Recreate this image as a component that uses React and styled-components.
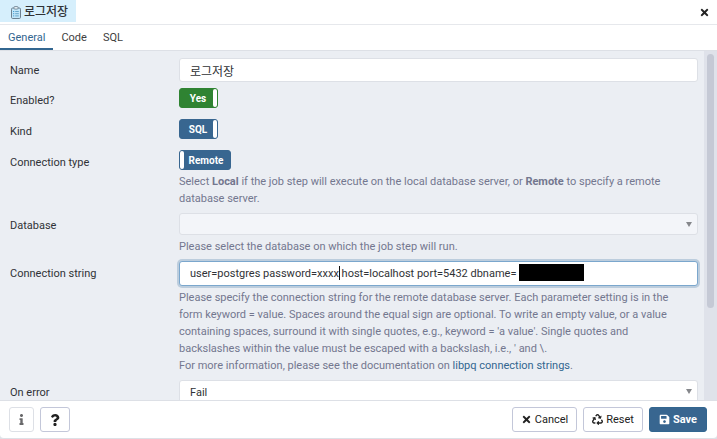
import React from "react";
import styled, { createGlobalStyle, css } from "styled-components";
import { FaTimes, FaRecycle, FaSave, FaInfo, FaQuestion } from "react-icons/fa";

const Global = createGlobalStyle`
  * { box-sizing: border-box; }
  body {
    margin: 0;
    background: #dde0e6;
    color: #303236;
    font: 11px/17px Roboto, "Noto Sans CJK KR", sans-serif;
  }
  button, input, select { font: inherit; color: inherit; }
`;

const Dialog = styled.main`
  display: flex;
  flex-direction: column;
  height: 100vh;
  border-bottom: 1px solid #dde0e6;
  border-radius: 0 0 4px 4px;
  background: #ffffff;
  overflow: hidden;
`;

const TitleBar = styled.header`
  display: flex;
  flex: none;
  align-items: flex-start;
  justify-content: space-between;
  height: 25px;
  border-bottom: 1px solid #e6e8ec;
`;

const Title = styled.h1`
  display: flex;
  align-items: center;
  gap: 3px;
  height: 22px;
  margin: 0;
  padding: 3px 8px 0 11px;
  background: #d6effc;
  font-size: 12px;
  font-weight: 500;
`;

const CloseButton = styled.button`
  display: flex;
  align-items: center;
  height: 24px;
  padding: 0 7px;
  border: 0;
  background: none;
  color: #222222;
  font-size: 11px;
`;

const Tabs = styled.nav`
  display: flex;
  flex: none;
  height: 26px;
  border-bottom: 1px solid #dde0e6;
`;

const Tab = styled.button`
  padding: 2px 8px 0;
  border: 0;
  border-bottom: 2px solid ${(p) => (p.$active ? "#326690" : "transparent")};
  background: none;
  color: ${(p) => (p.$active ? "#326690" : "#404040")};
`;

const Body = styled.div`
  display: flex;
  flex: 1;
  min-height: 0;
  background: #ebeef3;
`;

const Form = styled.form`
  flex: 1;
  min-width: 0;
  padding: 7px 6px 0 10px;
  overflow: hidden;
`;

const ScrollTrack = styled.div`
  flex: none;
  width: 13px;
  padding: 3px;
  background: #dfe2ea;
`;

const ScrollThumb = styled.div`
  width: 7px;
  height: 74%;
  border-radius: 4px;
  background: #c5c9d5;
`;

const Row = styled.div`
  display: grid;
  grid-template-columns: 169px minmax(0, 1fr);
  min-height: 24px;
  margin-bottom: 6px;
`;

const SwitchRow = styled(Row)`
  min-height: 25px;
`;

const FieldLabel = styled.label`
  padding-top: 4px;
`;

const field = css`
  display: block;
  width: 100%;
  height: 24px;
  padding: 0 10px;
  border: 1px solid #dde0e6;
  border-radius: 3px;
  outline: none;
  background: #ffffff;
`;

const TextInput = styled.input`
  ${field}
  font-size: ${(p) => p.$size || 11}px;
  ${(p) =>
    p.$active &&
    css`
      height: 25px;
      border-color: #7ba7cd;
      box-shadow: 0 0 0 2px #bccddd;
    `}
`;

const Select = styled.select`
  ${field}
  height: ${(p) => (p.disabled ? 22 : 24)}px;
  appearance: none;
  opacity: 1;
  &:disabled { background: #f3f5f9; }
`;

const Control = styled.div`
  position: relative;
`;

const Arrow = styled.svg`
  position: absolute;
  top: 9px;
  right: 6px;
  width: 6px;
  height: 5px;
  fill: #85878b;
  pointer-events: none;
`;

const Caret = styled.span`
  position: absolute;
  top: 5px;
  left: 160px;
  width: 1px;
  height: 14px;
  background: #111111;
`;

const Redaction = styled.span`
  position: absolute;
  top: 3px;
  left: 340px;
  width: 65px;
  height: 17px;
  background: #000000;
`;

const Help = styled.p`
  margin: 3px 0 0;
  padding-right: 12px;
  color: #73778f;
`;

const Link = styled.a`
  color: #326690;
  text-decoration: none;
`;

const SwitchInput = styled.input`
  position: absolute;
  inset: 0;
  width: 100%;
  height: 100%;
  margin: 0;
  opacity: 0;
`;

const Switch = styled.span`
  position: relative;
  display: flex;
  flex-direction: ${(p) => (p.$on ? "row" : "row-reverse")};
  width: ${(p) => (p.$on ? 39 : 52)}px;
  height: 20px;
  border: 1px solid ${(p) => p.$color};
  border-radius: 3px;
  background: ${(p) => p.$color};
  color: #ffffff;
  font-size: 10px;
  font-weight: 700;
  line-height: 19px;
  text-align: center;
`;

const SwitchText = styled.span`
  flex: 1;
  padding-left: ${(p) => (p.$on ? 3 : 0)}px;
  padding-right: ${(p) => (p.$on ? 0 : 2)}px;
`;

const SwitchHandle = styled.span`
  width: 4px;
  border-radius: 2px;
  background: #ffffff;
`;

const Footer = styled.footer`
  display: flex;
  flex: none;
  align-items: center;
  gap: 6px;
  height: 38px;
  padding: 0 10px 0 9px;
  border-top: 1px solid #dde0e6;
`;

const Spacer = styled.div`
  flex: 1;
`;

const Button = styled.button`
  display: flex;
  align-items: center;
  justify-content: center;
  gap: 3px;
  height: 25px;
  padding: 0 ${(p) => (p.$primary ? 9 : 8)}px;
  border: 1px solid ${(p) => (p.$primary ? "#326690" : "#c3c7d9")};
  border-radius: 3px;
  background: ${(p) => (p.$primary ? "#386690" : "#ffffff")};
  color: ${(p) => (p.$primary ? "#ffffff" : "#222222")};
  font-weight: ${(p) => (p.$primary ? 700 : 400)};
`;

const IconButton = styled(Button)`
  width: 30px;
  padding: 0;
  &:disabled {
    width: 25px;
    color: #69696b;
    border-color: #dde0e6;
  }
`;

const ClipboardIcon = () => (
  <svg width="10" height="13" viewBox="0 0 10 13" aria-hidden="true">
    <rect x="0.5" y="2" width="9" height="10.5" rx="1.2" fill="#c3e6f8" stroke="#6d8190" />
    <rect x="3" y="0.5" width="4" height="2.6" rx="0.8" fill="#e2ecf2" stroke="#6d8190" strokeWidth="0.8" />
    <path d="M2.2 5.5h1M2.2 7.7h1M2.2 9.9h1" stroke="#2b8fc9" />
    <path d="M4.2 5.5h3.6M4.2 7.7h3.6M4.2 9.9h3.6" stroke="#5d9fc4" strokeWidth="0.9" />
  </svg>
);

const Toggle = ({ id, text, on, color }) => (
  <Switch $on={on} $color={color}>
    <SwitchInput id={id} type="checkbox" role="switch" defaultChecked={on} />
    <SwitchText $on={on}>{text}</SwitchText>
    <SwitchHandle />
  </Switch>
);

const DropArrow = () => (
  <Arrow viewBox="0 0 6 5" aria-hidden="true">
    <path d="M0 0h6L3 5z" />
  </Arrow>
);

export default function App() {
  return (
    <>
      <Global />
      <Dialog>
        <TitleBar>
          <Title>
            <ClipboardIcon />
            로그저장
          </Title>
          <CloseButton aria-label="Close">
            <FaTimes />
          </CloseButton>
        </TitleBar>
        <Tabs>
          <Tab $active>General</Tab>
          <Tab>Code</Tab>
          <Tab>SQL</Tab>
        </Tabs>
        <Body>
          <Form>
            <Row>
              <FieldLabel htmlFor="name">Name</FieldLabel>
              <TextInput id="name" $size={12} defaultValue="로그저장" />
            </Row>
            <SwitchRow>
              <FieldLabel htmlFor="enabled">Enabled?</FieldLabel>
              <Toggle id="enabled" text="Yes" on color="#2f8332" />
            </SwitchRow>
            <SwitchRow>
              <FieldLabel htmlFor="kind">Kind</FieldLabel>
              <Toggle id="kind" text="SQL" on color="#386690" />
            </SwitchRow>
            <SwitchRow>
              <FieldLabel htmlFor="type">Connection type</FieldLabel>
              <div>
                <Toggle id="type" text="Remote" on={false} color="#386690" />
                <Help>
                  Select <b>Local</b> if the job step will execute on the local database server, or{" "}
                  <b>Remote</b> to specify a remote database server.
                </Help>
              </div>
            </SwitchRow>
            <Row>
              <FieldLabel htmlFor="database">Database</FieldLabel>
              <div>
                <Control>
                  <Select id="database" disabled />
                  <DropArrow />
                </Control>
                <Help>Please select the database on which the job step will run.</Help>
              </div>
            </Row>
            <Row>
              <FieldLabel htmlFor="connection">Connection string</FieldLabel>
              <div>
                <Control>
                  <TextInput
                    id="connection"
                    $active
                    defaultValue="user=postgres password=xxxx host=localhost port=5432 dbname="
                  />
                  <Caret />
                  <Redaction />
                </Control>
                <Help>
                  Please specify the connection string for the remote database server. Each parameter
                  setting is in the form keyword = value. Spaces around the equal sign are optional. To
                  write an empty value, or a value containing spaces, surround it with single quotes,
                  e.g., keyword = 'a value'. Single quotes and backslashes within the value must be
                  escaped with a backslash, i.e., ' and \.
                  <br />
                  For more information, please see the documentation on{" "}
                  <Link href="#libpq">libpq connection strings</Link>.
                </Help>
              </div>
            </Row>
            <Row>
              <FieldLabel htmlFor="onerror">On error</FieldLabel>
              <Control>
                <Select id="onerror">
                  <option>Fail</option>
                </Select>
                <DropArrow />
              </Control>
            </Row>
          </Form>
          <ScrollTrack>
            <ScrollThumb />
          </ScrollTrack>
        </Body>
        <Footer>
          <IconButton disabled aria-label="Information">
            <FaInfo size={11} />
          </IconButton>
          <IconButton aria-label="Help">
            <FaQuestion size={12} />
          </IconButton>
          <Spacer />
          <Button>
            <FaTimes size={11} />
            Cancel
          </Button>
          <Button>
            <FaRecycle size={11} />
            Reset
          </Button>
          <Button $primary>
            <FaSave size={11} />
            Save
          </Button>
        </Footer>
      </Dialog>
    </>
  );
}
